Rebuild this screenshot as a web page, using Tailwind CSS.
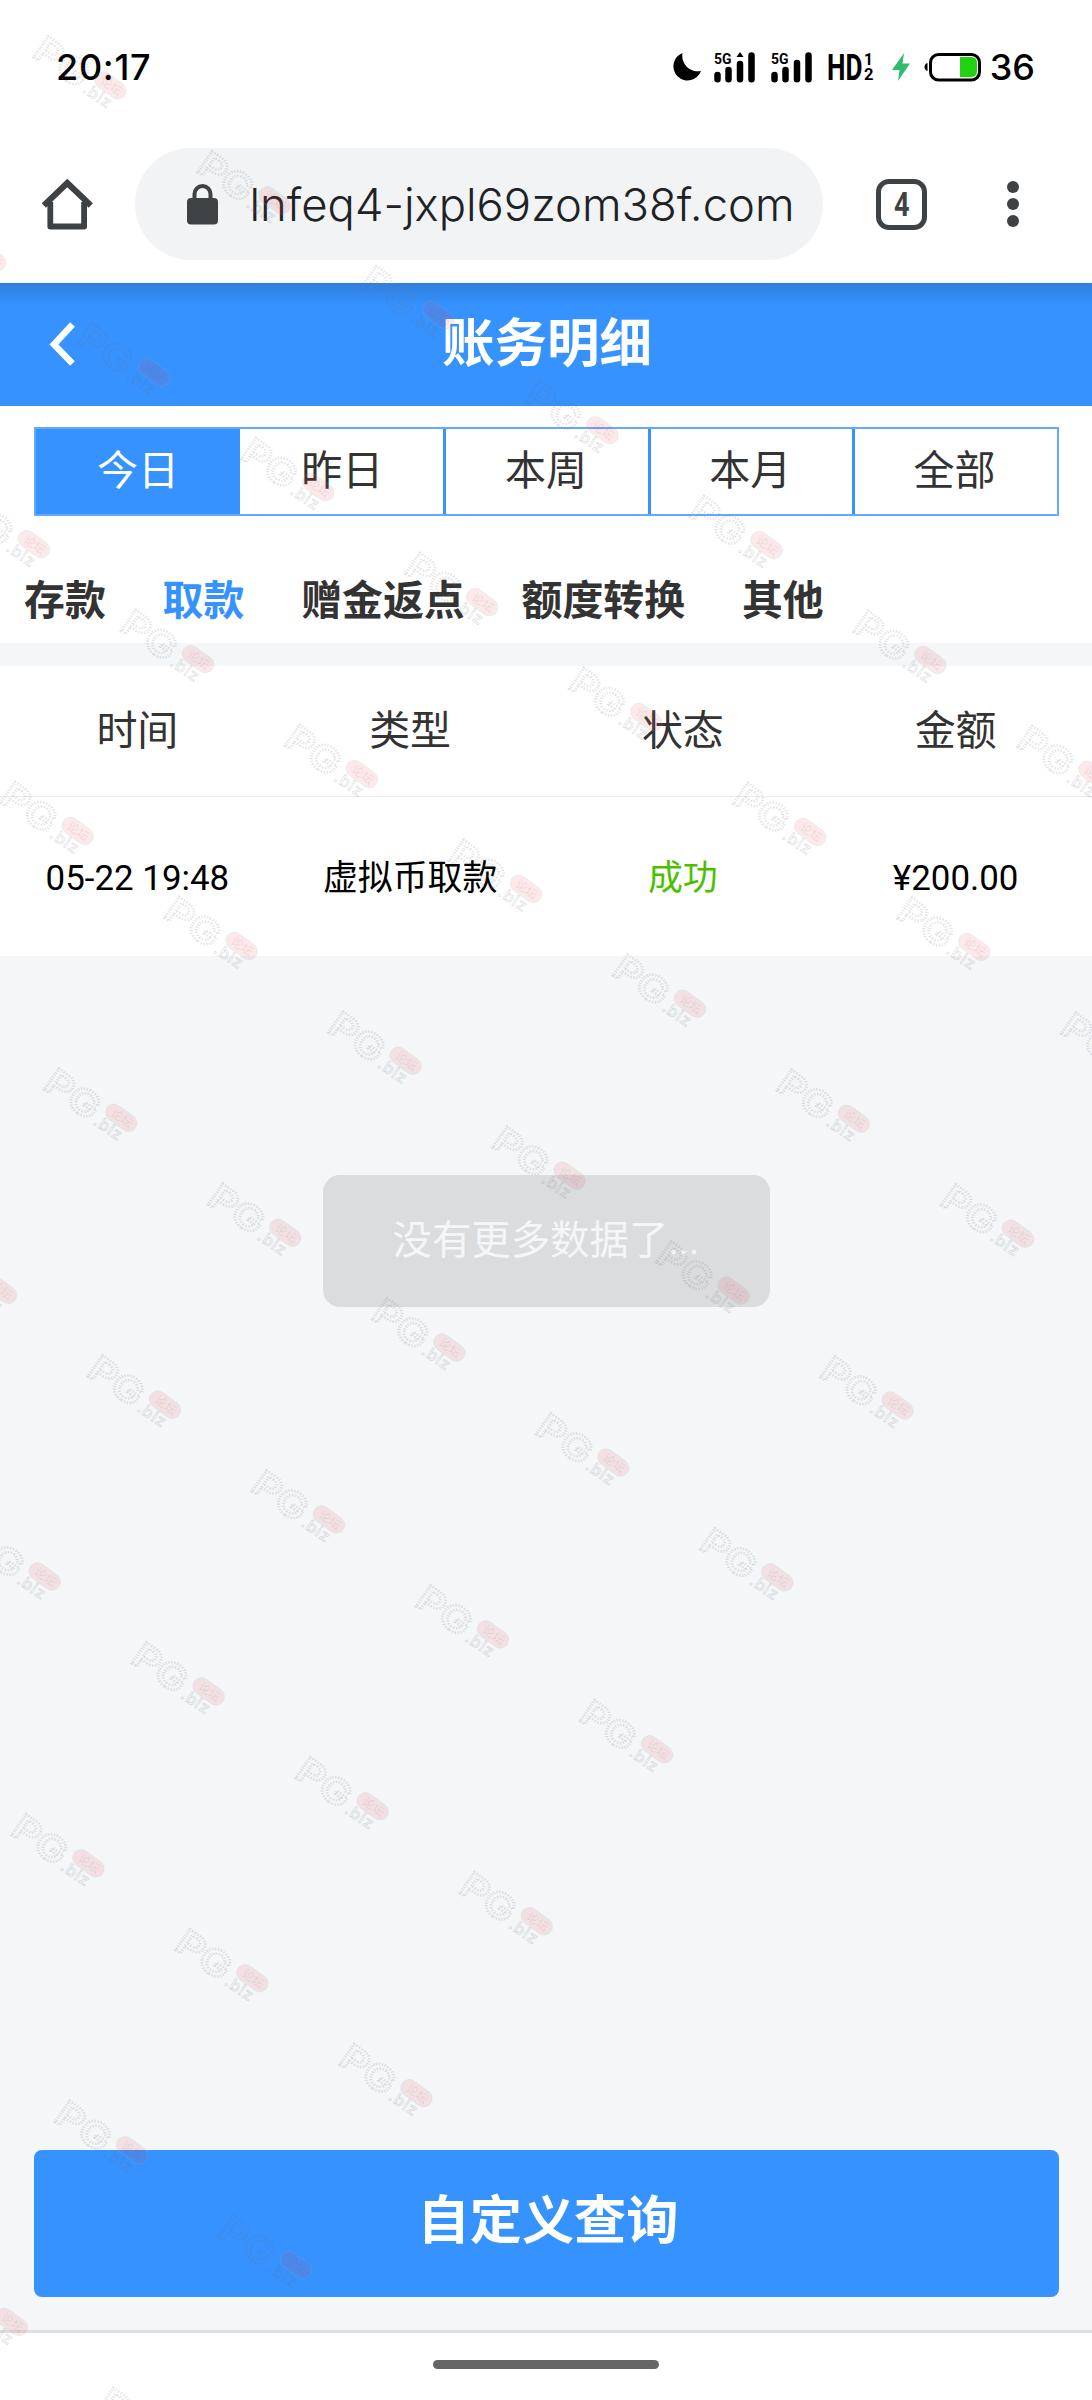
<!DOCTYPE html>
<html lang="zh-CN">
<head>
<meta charset="utf-8">
<title>账务明细</title>
<script src="https://cdn.jsdelivr.net/npm/@tailwindcss/browser@4"></script>
</head>
<body class="bg-[#f4f6f8]">
<div class="relative flex h-[2400px] w-[1092px] flex-col overflow-hidden bg-[#f4f6f8] font-['Roboto','Noto_Sans_CJK_SC',sans-serif] text-[#333]">

  <!-- status bar -->
  <header class="flex h-[134px] shrink-0 items-center justify-between bg-white pl-[56px] pr-[57px] font-['Inter',sans-serif] text-[36px] leading-none text-black">
    <span class="font-[450] tracking-[0.700px]">20:17</span>
    <div class="flex items-center">
      <svg class="mr-[13px] h-[30px] w-[29px]" viewBox="0 0 29 30"><path d="M10.500 1 A14.200 14.200 0 1 0 29 19 A15.500 15.500 0 0 1 10.500 1Z"/></svg>
      <svg class="mr-[16px] h-[32px] w-[41px] overflow-visible" viewBox="0 0 41 32">
        <text x="0" y="12.500" font-family="Roboto" font-weight="700" font-size="15.500" textLength="17.500" lengthAdjust="spacingAndGlyphs">5G</text>
        <g stroke="#000" stroke-width="6.500" stroke-linecap="round"><path d="M3.500 24v4.200M14.500 19v9.200M26 13v15.200M37.500 4.500v23.700"/></g>
        <path d="M26 1l3.500 5h-7z"/>
      </svg>
      <svg class="mr-[16px] h-[32px] w-[41px] overflow-visible" viewBox="0 0 41 32">
        <text x="0" y="12.500" font-family="Roboto" font-weight="700" font-size="15.500" textLength="17.500" lengthAdjust="spacingAndGlyphs">5G</text>
        <g stroke="#000" stroke-width="6.500" stroke-linecap="round"><path d="M3.500 24v4.200M14.500 19v9.200M26 12v16.200M37.500 4.500v23.700"/></g>
      </svg>
      <svg class="mr-[19px] h-[32px] w-[45px] overflow-visible" viewBox="0 0 45 32" font-family="Roboto" font-weight="700">
        <text x="-1" y="29" font-size="36" textLength="35.500" lengthAdjust="spacingAndGlyphs">HD</text>
        <text x="36" y="14" font-size="16" textLength="9" lengthAdjust="spacingAndGlyphs">1</text>
        <text x="36" y="29" font-size="16" textLength="9.500" lengthAdjust="spacingAndGlyphs">2</text>
      </svg>
      <svg class="mr-[14px] h-[28px] w-[18px]" viewBox="0 0 18 28"><path fill="#2fbd6c" d="M12 0L0 17h7.500L6 28 18 10.500h-7.500z"/></svg>
      <svg class="mr-[9px] h-[30px] w-[57px]" viewBox="0 0 57 30"><path d="M3.500 11v8c-4-1-4-7 0-8z"/><rect x="6.500" y="2.500" width="49" height="25.500" rx="8" fill="none" stroke="#000" stroke-width="3"/><path fill="#22d112" d="M36 5h11q6 0 6 6v8q0 6-6 6H36z"/></svg>
      <span class="font-[450]">36</span>
    </div>
  </header>

  <!-- browser toolbar -->
  <div class="flex h-[149px] shrink-0 items-center bg-white pb-[9px] pl-[42px]">
    <svg class="mr-[42px] h-[53px] w-[51px]" viewBox="0 0 51 53" fill="none" stroke="#3e4245" stroke-linejoin="round"><path stroke-width="5.800" d="M8.300 24v24.500h33.800V24"/><path stroke-width="6" stroke-linejoin="miter" d="M1.800 27.500L25.300 5l23.500 22.500"/></svg>
    <div class="flex h-[112px] w-[688px] items-center overflow-hidden rounded-full bg-[#f1f3f4] pl-[52px]">
      <svg class="mr-[34px] h-[41px] w-[31px] shrink-0" viewBox="0 0 31 41"><rect y="14" width="31" height="26.500" rx="4" fill="#3e4245"/><path fill="none" stroke="#3e4245" stroke-width="4" d="M7.500 15V10a8 8 0 0 1 16 0v5"/></svg>
      <svg class="h-[60px] w-[545px] shrink-0" viewBox="0 0 545 60"><text x="-2.500" y="47" fill="#202124" font-family="Inter" font-weight="350" font-size="45.500" textLength="545" lengthAdjust="spacingAndGlyphs">lnfeq4-jxpl69zom38f.com</text></svg>
    </div>
    <div class="ml-[53px] flex size-[51px] items-center justify-center rounded-[13px] border-[5.500px] border-[#3e4245]">
      <svg class="size-[40px]" viewBox="0 0 40 40"><text x="12" y="32" fill="#3e4245" font-family="Roboto" font-weight="700" font-size="34" textLength="15.500" lengthAdjust="spacingAndGlyphs">4</text></svg>
    </div>
    <div class="ml-[80px] flex flex-col gap-[5.500px]">
      <i class="size-[11.500px] rounded-full bg-[#3e4245]"></i><i class="size-[11.500px] rounded-full bg-[#3e4245]"></i><i class="size-[11.500px] rounded-full bg-[#3e4245]"></i>
    </div>
  </div>

  <!-- page title -->
  <div class="flex h-[122.500px] shrink-0 items-center bg-[#3592ff] bg-linear-to-b from-[#2f80de] to-[#3592ff] to-[22px] pl-[49px]">
    <svg class="h-[44px] w-[26px]" viewBox="0 0 26 44"><path fill="none" stroke="#fff" stroke-width="6.500" d="M23.500 2.500L5 22.500l18.500 19"/></svg>
    <h1 class="ml-[-73px] w-[1092px] pb-px text-center text-[52.500px] font-bold leading-[76px] text-white">账务明细</h1>
  </div>

  <!-- period filter -->
  <section class="h-[237.500px] shrink-0 bg-white pl-[34px] pr-[33px] pt-[21.500px]">
    <div class="grid h-[89px] grid-cols-5 border-2 border-[#62aaff] text-center text-[41px] leading-[85px]">
      <span class="bg-[#3592ff] text-white">今日</span><span>昨日</span><span class="-ml-px border-l-[3px] border-[#3592ff] pr-[3px]">本周</span><span class="-ml-px border-l-[3px] border-[#3592ff] pr-[3px]">本月</span><span class="-ml-px border-l-[3px] border-[#3592ff] pr-[3px]">全部</span>
    </div>
    <nav class="-ml-[10px] mt-[53px] flex gap-[56.800px] whitespace-nowrap text-[40.900px] font-bold leading-[64px]">
      <span>存款</span><span class="text-[#3592ff]">取款</span><span>赠金返点</span><span>额度转换</span><span>其他</span>
    </nav>
  </section>

  <!-- records -->
  <section class="mt-[23px] shrink-0 bg-white text-center">
    <div class="grid h-[131px] grid-cols-4 border-b-[1.500px] border-[#ececec] pl-px text-[41px] leading-[131px]">
      <span>时间</span><span>类型</span><span>状态</span><span>金额</span>
    </div>
    <div class="grid h-[159px] grid-cols-4 pl-px text-[34.900px] leading-[164px] text-black">
      <span>05-22 19:48</span><span>虚拟币取款</span><span class="text-[#4cbf00]">成功</span><span>¥200.00</span>
    </div>
  </section>

  <!-- toast -->
  <div class="mx-auto mt-[219px] flex h-[132px] w-[447px] shrink-0 items-center justify-center rounded-[17px] bg-[#dbdcde] text-[39.400px] leading-none text-[#f4f6f8]">没有更多数据了...</div>

  <button class="mr-[33px] ml-[34px] mt-auto mb-[33px] h-[147px] shrink-0 rounded-[8px] bg-[#3592ff] pb-[2px] pl-[3px] text-[52.200px] font-bold leading-none text-white">自定义查询</button>

  <footer class="flex h-[70px] shrink-0 justify-center border-t-[3px] border-[#e0e0e0] bg-white pt-[27px]"><i class="h-[9px] w-[226px] rounded-full bg-[#666]"></i></footer>

  <!-- watermark overlay -->
  <svg class="pointer-events-none absolute inset-0 h-[2400px] w-[1092px]" viewBox="0 0 1092 2400">
    <defs>
      <g id="mark">
        <g fill="none" stroke="#70707c" font-family="Inter">
          <text transform="translate(-1 21) rotate(35)" font-size="35" font-weight="600" textLength="59" lengthAdjust="spacingAndGlyphs" stroke-width="2.600" stroke-opacity=".2" stroke-dasharray="1.200 1.400">PG</text>
          <text transform="translate(49.500 57) rotate(34)" font-size="16" font-weight="500" stroke-width=".7" stroke-opacity=".25" letter-spacing="1">.biz</text>
        </g>
        <rect x="-17.500" y="-8.500" width="35" height="17" rx="8.500" transform="translate(78.500 51) rotate(36)" fill="#f04050" fill-opacity=".12" stroke="#80d8d8" stroke-opacity=".15"/>
        <text transform="translate(67 48) rotate(36)" font-family="Noto Sans CJK SC" font-size="12" fill="#606070" fill-opacity=".13">论坛</text>
      </g>
    </defs>
    <g id="marks"></g>
  </svg>
</div>
<script>
  const layer = document.getElementById('marks');
  for (let j = 0; j < 10; j++) for (let i = 0; i < 8; i++) {
    const x = 32 + 164 * i - 120.3 * j, y = 34.5 + 114.9 * i + 171.9 * j;
    if (x < -100 || x > 1092 || y > 2400) continue;
    const u = document.createElementNS('http://www.w3.org/2000/svg', 'use');
    u.setAttribute('href', '#mark');
    u.setAttribute('x', x);
    u.setAttribute('y', y);
    layer.appendChild(u);
  }
</script>
</body>
</html>
